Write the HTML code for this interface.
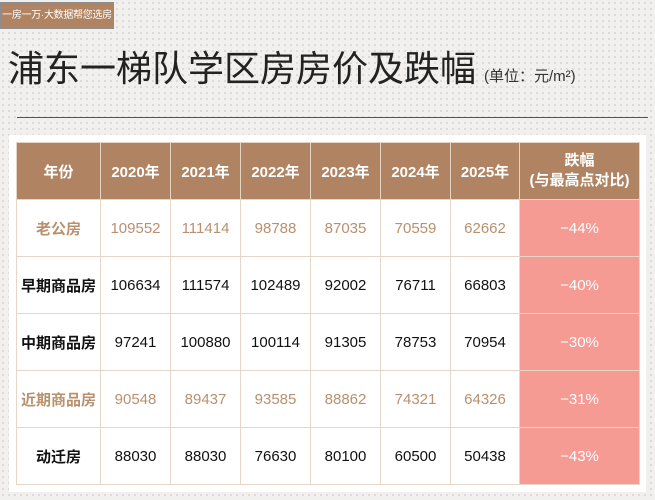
<!DOCTYPE html>
<html><head><meta charset="utf-8"><style>
body{margin:0;width:655px;height:500px;background:#f1f0ef;background-image:radial-gradient(#d6d4d2 0.8px,transparent 1px);background-size:6px 6px;font-family:"Liberation Sans","Noto Sans CJK SC",sans-serif;position:relative;overflow:hidden}
.tag{position:absolute;left:0;top:2px;width:114px;height:27px;background:#b08462;border:1px solid #8d8d8d;box-sizing:border-box;color:#fff;font-size:10px;line-height:25px;text-align:center;white-space:nowrap;letter-spacing:-0.3px}
.title{position:absolute;left:8px;top:40px;font-size:36px;color:#222;white-space:nowrap}
.title small{font-size:15px;color:#333;margin-left:8px}
.rule{position:absolute;left:17px;top:117px;width:631px;height:1px;background:#555}
.panel{position:absolute;left:9px;top:135px;width:637px;height:357px;background:#fff}
table{position:absolute;left:16px;top:142px;border-collapse:collapse;table-layout:fixed}
td{border:1px solid #e6d6c8;text-align:center;height:56px;padding:0;font-size:15px;color:#111}
tr.h td{background:#b08462;color:#fff;font-weight:bold;font-size:15px;border-color:#e5d3c4}
tr.b td{color:#b8906e}
tr td.p{background:#f69b94;color:#fff;font-weight:normal;font-size:15px}
tr.h td.p{background:#b08462;font-weight:bold;line-height:20px}
td.n{font-weight:bold}
</style></head><body>
<div class="tag">一房一万·大数据帮您选房</div>
<div class="title">浦东一梯队学区房房价及跌幅<small>(单位：元/m²)</small></div>
<div class="rule"></div>
<div class="panel"></div>
<table>
<colgroup><col style="width:84px"><col style="width:70px"><col style="width:70px"><col style="width:70px"><col style="width:70px"><col style="width:70px"><col style="width:69px"><col style="width:120px"></colgroup>
<tr class="h"><td>年份</td><td>2020年</td><td>2021年</td><td>2022年</td><td>2023年</td><td>2024年</td><td>2025年</td><td class="p">跌幅<br>(与最高点对比)</td></tr>
<tr class="b"><td class="n">老公房</td><td>109552</td><td>111414</td><td>98788</td><td>87035</td><td>70559</td><td>62662</td><td class="p">−44%</td></tr>
<tr><td class="n">早期商品房</td><td>106634</td><td>111574</td><td>102489</td><td>92002</td><td>76711</td><td>66803</td><td class="p">−40%</td></tr>
<tr><td class="n">中期商品房</td><td>97241</td><td>100880</td><td>100114</td><td>91305</td><td>78753</td><td>70954</td><td class="p">−30%</td></tr>
<tr class="b"><td class="n">近期商品房</td><td>90548</td><td>89437</td><td>93585</td><td>88862</td><td>74321</td><td>64326</td><td class="p">−31%</td></tr>
<tr><td class="n">动迁房</td><td>88030</td><td>88030</td><td>76630</td><td>80100</td><td>60500</td><td>50438</td><td class="p">−43%</td></tr>
</table>
</body></html>
